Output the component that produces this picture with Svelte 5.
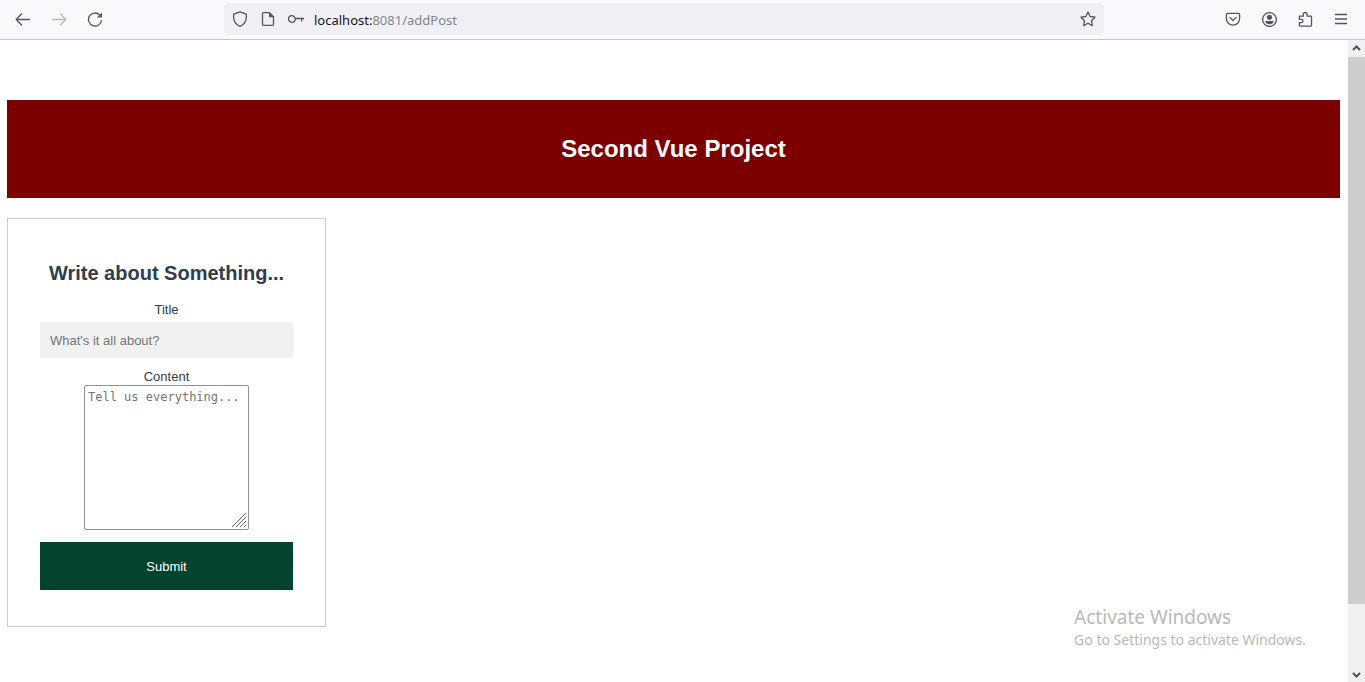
<script>
  let title = $state('');
  let content = $state('');
</script>

<div class="window">
  <header class="toolbar">
    <nav class="history" aria-label="History">
      <button type="button" aria-label="Back">
        <svg width="16" height="16" viewBox="0 0 16 16"><path d="M15 8.500H1.500M7 2.500 1.200 8.500 7 14.500" /></svg>
      </button>
      <button type="button" aria-label="Forward" class="faded">
        <svg width="16" height="16" viewBox="0 0 16 16"><path d="M1 8.500h13.500M9 2.500l5.800 6L9 14.500" /></svg>
      </button>
      <button type="button" aria-label="Reload">
        <svg width="16" height="16" viewBox="0 0 16 16"><path d="M12.800 4.100A6.500 6.500 0 1 0 14.500 9" /><path class="solid" d="M15 1.400v4.600c0 .3-.2.500-.5.500H9.900z" /></svg>
      </button>
    </nav>

    <div class="address">
      <svg width="16" height="16" viewBox="0 0 16 16"><path d="M8 .8 14.200 3.200C14.900 8 13.200 13.200 8 15.300 2.800 13.200 1.100 8 1.800 3.200z" /></svg>
      <svg width="16" height="16" viewBox="0 0 16 16"><path d="M3.500 1.700H9.500L13.500 5.700V13.300a1 1 0 0 1-1 1h-9a1 1 0 0 1-1-1V2.700a1 1 0 0 1 1-1z" /><path class="solid" d="M9 1.500 13.800 6.300H10a1 1 0 0 1-1-1z" /></svg>
      <svg width="18" height="16" viewBox="0 0 18 16"><circle cx="3.900" cy="8" r="3.300" /><path d="M7.200 7.500h8.800M13.800 7.500v3" /></svg>
      <span class="url"><b>localhost:</b>8081/addPost</span>
      <button type="button" aria-label="Bookmark this page">
        <svg width="16" height="16" viewBox="0 0 16 16"><path d="m8 1 2.100 4.500 4.900.7-3.500 3.500.8 5L8 12.300l-4.300 2.400.8-5L1 6.200l4.900-.7z" /></svg>
      </button>
    </div>

    <div class="actions">
      <button type="button" aria-label="Save to Pocket">
        <svg width="16" height="16" viewBox="0 0 16 16"><path d="M2.600 2.400h10.800a1.200 1.200 0 0 1 1.200 1.200v4a6.600 6.600 0 0 1-13.200 0v-4a1.200 1.200 0 0 1 1.200-1.200z" /><path d="M4.500 6.100 8 9.500l3.500-3.400" /></svg>
      </button>
      <button type="button" aria-label="Account">
        <svg width="16" height="16" viewBox="0 0 16 16"><circle cx="8.500" cy="8.500" r="6.900" /><circle class="solid" cx="8.500" cy="6.300" r="2.600" /><path class="solid" d="M4.200 10h8.600C12.500 12.200 10.700 13.300 8.500 13.300S4.500 12.200 4.200 10z" /></svg>
      </button>
      <button type="button" aria-label="Extensions">
        <svg width="16" height="16" viewBox="0 0 16 16"><path d="M2.400 5.200h3.900V3.400a1.900 1.900 0 0 1 3.800 0v1.800h3.600a.8.800 0 0 1 .8.800v8.300a.8.800 0 0 1-.8.800H3.200a.8.800 0 0 1-.8-.8v-2.600h1.900a1.700 1.700 0 0 0 0-3.400H2.400z" /></svg>
      </button>
      <button type="button" aria-label="Menu">
        <svg width="16" height="16" viewBox="0 0 16 16"><path d="M2 3.500h12M2 8h12M2 12.500h12" /></svg>
      </button>
    </div>
  </header>

  <div class="viewport">
    <main>
      <h1>Second Vue Project</h1>

      <form onsubmit={(event) => event.preventDefault()}>
        <h2>Write about Something...</h2>
        <label for="title">Title</label>
        <input id="title" type="text" placeholder="What's it all about?" bind:value={title} />
        <label for="content">Content</label>
        <div class="area">
          <textarea id="content" placeholder="Tell us everything..." bind:value={content}></textarea>
          <svg class="grip" width="14" height="14" viewBox="0 0 14 14"><path d="M0 14 14 0M4 14 14 4M8 14l6-6M12 14l2-2" /></svg>
        </div>
        <button class="submit" type="submit">Submit</button>
      </form>
    </main>

    <div class="scrollbar" aria-hidden="true">
      <svg width="17" height="17" viewBox="0 0 17 17"><path d="m5 10 3.500-3.500L12 10" /></svg>
      <div class="track"><div class="thumb"></div></div>
      <svg width="17" height="17" viewBox="0 0 17 17"><path d="m5 8 3.500 3.500L12 8" /></svg>
    </div>
  </div>

  <aside class="watermark">
    <strong>Activate Windows</strong>
    <span>Go to Settings to activate Windows.</span>
  </aside>
</div>

<style>
  :global(body) {
    margin: 0;
    background: #fff;
  }

  .window {
    display: flex;
    flex-direction: column;
    height: 100vh;
    overflow: hidden;
    color: #2c3e50;
    font-family: 'Liberation Sans', Arial, sans-serif;
    font-size: 13px;
  }

  button {
    padding: 0;
    border: 0;
    background: none;
    color: inherit;
    font: inherit;
  }

  svg {
    display: block;
    flex: none;
    fill: none;
    stroke: currentColor;
    stroke-width: 1.3;
    stroke-linejoin: round;
  }

  .solid {
    fill: currentColor;
    stroke: none;
  }

  .toolbar {
    display: grid;
    grid-template-columns: 224px 1fr 261px;
    align-items: center;
    box-sizing: border-box;
    height: 40px;
    padding-bottom: 1px;
    border-bottom: 1px solid #c8c8cb;
    background: #f9f9fb;
    color: #55545e;
  }

  .history {
    display: flex;
    gap: 20px;
    padding-left: 15px;
  }

  .faded {
    color: #b9b9be;
  }

  .address {
    display: flex;
    align-items: center;
    gap: 12px;
    box-sizing: border-box;
    height: 32px;
    padding: 0 8px;
    border-radius: 4px;
    background: #f0f0f4;
  }

  .url {
    flex: 1;
    margin-left: -4px;
    padding-top: 2px;
    color: #85858c;
    font-family: 'Segoe UI', 'Noto Sans', sans-serif;
    font-size: 13px;
  }

  .url b {
    color: #15141a;
    font-weight: 400;
  }

  .actions {
    display: flex;
    justify-content: flex-end;
    gap: 20px;
    padding-right: 16px;
  }

  .viewport {
    display: flex;
    flex: 1;
    min-height: 0;
  }

  main {
    flex: 1;
    padding: 60px 8px 0 7px;
    text-align: center;
  }

  h1 {
    margin: 0 0 20px;
    padding: 35px 0;
    background: #7d0000;
    color: #fff;
    font-size: 24px;
    line-height: 28px;
  }

  form {
    display: flex;
    flex-direction: column;
    box-sizing: border-box;
    width: 319px;
    max-width: 100%;
    padding: 42px 32px 36px;
    border: 1px solid #ccc;
  }

  h2 {
    margin: 0 0 17px;
    font-size: 20px;
    line-height: 24px;
    white-space: nowrap;
  }

  label {
    line-height: 16px;
  }

  input {
    box-sizing: border-box;
    width: 100%;
    height: 36px;
    margin: 4px 0 11px;
    padding: 0 10px;
    border: 0;
    background: #f1f1f1;
    font: inherit;
  }

  ::placeholder {
    color: #757575;
    opacity: 1;
  }

  .area {
    position: relative;
    align-self: center;
    margin-bottom: 12px;
  }

  textarea {
    display: block;
    box-sizing: border-box;
    width: 165px;
    height: 145px;
    padding: 3px;
    border: 1px solid #8f8f9d;
    border-radius: 2px;
    font-family: Consolas, 'DejaVu Sans Mono', monospace;
    font-size: 12px;
    line-height: 16px;
    resize: none;
  }

  .grip {
    position: absolute;
    right: 3px;
    bottom: 3px;
    color: #666;
    stroke-width: 1;
    pointer-events: none;
  }

  .submit {
    height: 48px;
    background: #04432d;
    color: #fff;
  }

  .scrollbar {
    display: flex;
    flex-direction: column;
    width: 17px;
    background: #f0f0f0;
    color: #505050;
  }

  .scrollbar svg {
    stroke-width: 2;
    stroke-linejoin: miter;
  }

  .track {
    flex: 1;
  }

  .thumb {
    height: 90%;
    background: #cdcdcd;
  }

  .watermark {
    position: absolute;
    right: 59px;
    bottom: 32px;
    display: flex;
    flex-direction: column;
    color: #b9b9b9;
    font-family: 'Segoe UI', 'Noto Sans', sans-serif;
    font-size: 14px;
    line-height: 20px;
    pointer-events: none;
  }

  .watermark strong {
    font-size: 19px;
    font-weight: 400;
    line-height: 26px;
  }
</style>
